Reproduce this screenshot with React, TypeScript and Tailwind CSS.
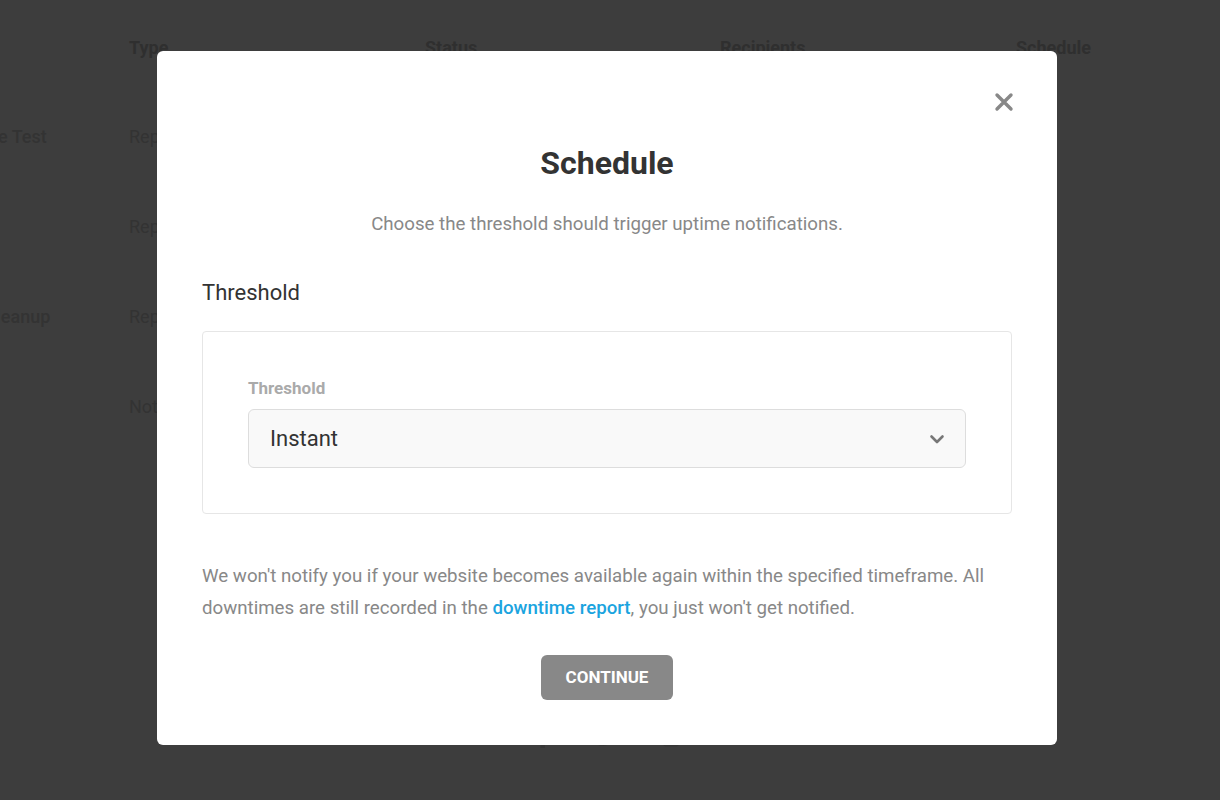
import { FaFacebookF, FaTwitter, FaInstagram } from "react-icons/fa";

const rows = [
  { name: "Monthly Uptime Test", type: "Report" },
  { name: "Backup", type: "Report" },
  { name: "Monthly Log Cleanup", type: "Report" },
  { name: "Outage", type: "Notification" },
];

function BackgroundPage() {
  return (
    <div className="h-[800px] bg-[#3d3d3d] overflow-hidden">
      <div className="ml-[-120px] w-[1440px] pt-[34px]">
        <div className="grid grid-cols-[249px_296px_295px_296px_296px] text-[18px] font-bold text-[#2f2f2f]">
          <div />
          <div>Type</div>
          <div>Status</div>
          <div>Recipients</div>
          <div>Schedule</div>
        </div>
        <div className="mt-[62px] flex flex-col gap-[63px]">
          {rows.map((row) => (
            <div
              key={row.name}
              className="grid grid-cols-[249px_296px_295px_296px_296px] text-[18px] text-[#333333]"
            >
              <div className="font-medium">{row.name}</div>
              <div>{row.type}</div>
              <div>Active</div>
              <div>2 recipients</div>
              <div>Daily</div>
            </div>
          ))}
        </div>
      </div>
      <div className="mt-[306px] flex justify-center gap-[42px] pr-[6px] text-[22px] text-[#363636]">
        <FaFacebookF />
        <FaTwitter />
        <FaInstagram />
      </div>
    </div>
  );
}

function ChevronDown() {
  return (
    <svg width="16" height="16" viewBox="0 0 16 16" fill="none">
      <path
        d="M2.5 5.5 L8 11 L13.5 5.5"
        stroke="#777777"
        strokeWidth="2.6"
        strokeLinecap="round"
        strokeLinejoin="round"
      />
    </svg>
  );
}

function CloseIcon() {
  return (
    <svg width="20" height="20" viewBox="0 0 20 20" fill="none">
      <path d="M3 3 L17 17 M17 3 L3 17" stroke="#888888" strokeWidth="3.4" strokeLinecap="round" />
    </svg>
  );
}

function ScheduleModal() {
  return (
    <div className="absolute inset-0 flex items-start justify-center pt-[51px] pr-[6px]">
      <div className="relative w-[900px] rounded-[6px] bg-white px-[45px] pt-[92px] pb-[45px]">
        <button className="absolute top-[41px] right-[43px] flex p-0">
          <CloseIcon />
        </button>

        <h2 className="text-center text-[32px] leading-[40px] font-bold text-[#333333]">Schedule</h2>
        <p className="mt-[27px] text-center text-[18.7px] leading-[28px] text-[#888888]">
          Choose the threshold should trigger uptime notifications.
        </p>

        <h3 className="mt-[40px] text-[22px] leading-[30px] text-[#333333]">Threshold</h3>

        <div className="mt-[23px] rounded-[4px] border border-[#e6e6e6] px-[45px] pt-[46px] pb-[45px]">
          <label className="block text-[17px] leading-[20px] font-bold text-[#aaaaaa]">Threshold</label>
          <div className="mt-[11px] flex h-[59px] items-center justify-between rounded-[6px] border border-[#dddddd] bg-[#f9f9f9] pl-[21px] pr-[20px]">
            <span className="text-[22px] text-[#333333]">Instant</span>
            <ChevronDown />
          </div>
        </div>

        <p className="mt-[46px] text-[18.7px] leading-[32px] text-[#888888]">
          We won't notify you if your website becomes available again within the specified timeframe. All
          downtimes are still recorded in the{" "}
          <a className="font-medium text-[#1ba4df]">downtime report</a>, you just won't get notified.
        </p>

        <div className="mt-[31px] flex justify-center">
          <button className="h-[45px] w-[132px] rounded-[6px] bg-[#888888] text-[17px] font-bold text-white uppercase">
            Continue
          </button>
        </div>
      </div>
    </div>
  );
}

export default function App() {
  return (
    <div className="relative h-[800px] overflow-hidden font-['Roboto',sans-serif]">
      <BackgroundPage />
      <ScheduleModal />
    </div>
  );
}
